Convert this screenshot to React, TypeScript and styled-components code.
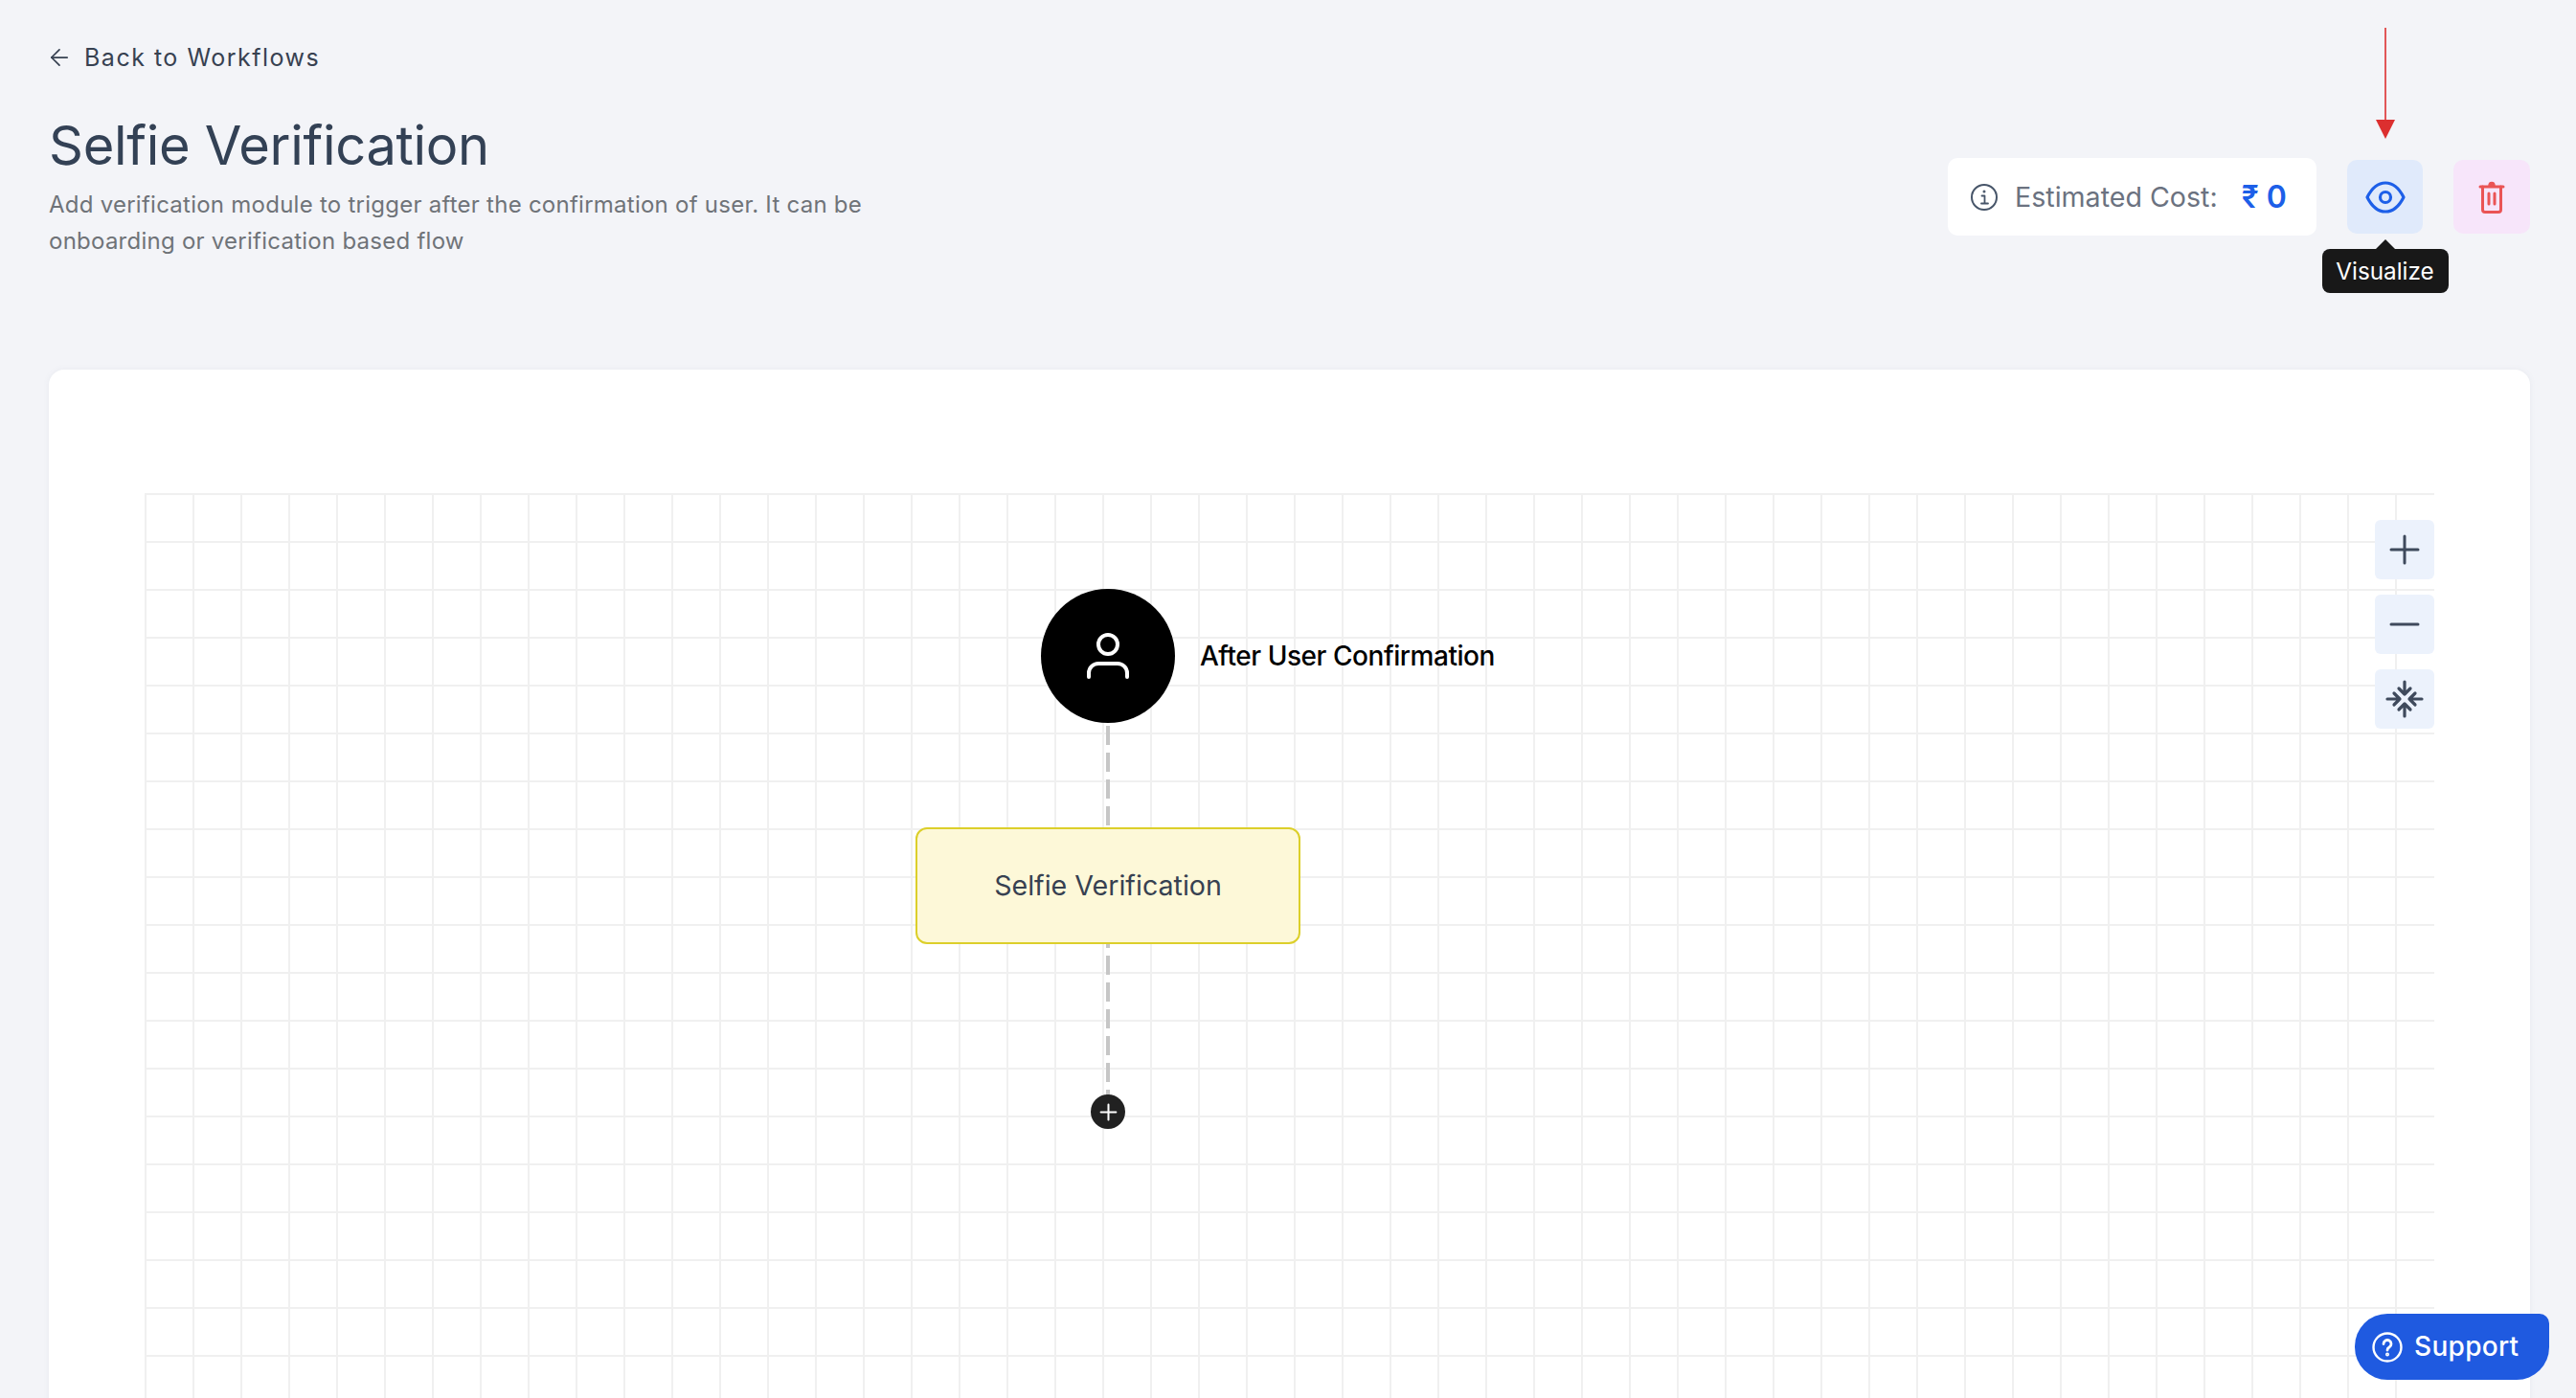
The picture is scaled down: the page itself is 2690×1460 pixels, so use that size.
import styled, { createGlobalStyle } from "styled-components";
import { ArrowLeft, Plus, Minus } from "lucide-react";

const GlobalStyle = createGlobalStyle`
    html, body {
        margin: 0;
        padding: 0;
        height: 100%;
        overflow: hidden;
        background: #f3f4f8;
        font-family: Inter, "Liberation Sans", sans-serif;
    }
    * {
        box-sizing: border-box;
    }
`;

const Page = styled.div`
    position: relative;
    height: 1460px;
    overflow: hidden;
    padding: 40px 48px 0 51px;
`;

const BackLink = styled.a`
    display: flex;
    align-items: center;
    gap: 12px;
    height: 40px;
    color: #374151;
    font-size: 25px;
    letter-spacing: 1.5px;
    svg {
        margin-left: -3px;
    }
`;

const Header = styled.div`
    display: flex;
    justify-content: space-between;
    align-items: flex-start;
    height: 306px;
`;

const TitleBlock = styled.div`
    width: 900px;
    padding-top: 38px;
`;

const Title = styled.h1`
    margin: 0;
    color: #334155;
    font-size: 56px;
    line-height: 68px;
    font-weight: 400;
    letter-spacing: -0.3px;
`;

const Description = styled.p`
    margin: 9px 0 0;
    color: #6f7378;
    font-size: 24px;
    line-height: 38px;
    letter-spacing: 0.25px;
`;

const Actions = styled.div`
    display: flex;
    align-items: center;
    margin-top: 85px;
`;

const CostBox = styled.div`
    display: flex;
    align-items: center;
    width: 385px;
    height: 81px;
    padding-left: 24px;
    background: #fff;
    border-radius: 10px;
    color: #6b7280;
    font-size: 28.6px;
    svg {
        color: #475569;
        margin-right: 18px;
    }
`;

const CostValue = styled.span`
    margin-left: 25px;
    color: #1d5fe8;
    font-size: 32px;
    font-weight: 600;
`;

const IconButton = styled.button<{ $bg: string; $color: string; $width: number }>`
    position: relative;
    display: flex;
    align-items: center;
    justify-content: center;
    width: ${props => props.$width}px;
    height: 77px;
    margin-left: 32px;
    padding: 0;
    border: none;
    border-radius: 10px;
    background: ${props => props.$bg};
    color: ${props => props.$color};
`;

const Tooltip = styled.div`
    position: absolute;
    top: 93px;
    left: 50%;
    transform: translateX(-50%);
    width: 132px;
    height: 46px;
    font-family: Inter, "Liberation Sans", sans-serif;
    line-height: 46px;
    text-align: center;
    border-radius: 8px;
    background: #181818;
    color: #fff;
    font-size: 24.3px;
    white-space: nowrap;
    &::before {
        content: "";
        position: absolute;
        top: -10px;
        left: 50%;
        margin-left: -10px;
        border-left: 10px solid transparent;
        border-right: 10px solid transparent;
        border-bottom: 10px solid #181818;
    }
`;

const PointerArrow = styled.svg`
    position: absolute;
    left: 2480px;
    top: 29px;
`;

const Card = styled.div`
    height: 1200px;
    padding: 129px 100px 0;
    background: #fff;
    border-radius: 16px;
    box-shadow: 0 0 6px rgba(100, 116, 139, 0.08);
`;

const Canvas = styled.div`
    position: relative;
    height: 1000px;
    overflow: hidden;
    background-color: #fff;
    background-image:
        linear-gradient(#f0f0f0 2px, transparent 2px),
        linear-gradient(90deg, #f0f0f0 2px, transparent 2px);
    background-size: 50px 50px;
`;

const ZoomControls = styled.div`
    position: absolute;
    top: 28px;
    right: 0;
    display: flex;
    flex-direction: column;
    gap: 16px;
`;

const ZoomButton = styled.button`
    display: flex;
    align-items: center;
    justify-content: center;
    width: 62px;
    height: 62px;
    padding: 0;
    border: none;
    border-radius: 6px;
    background: #ecf2fc;
    color: #3f4a5c;
`;

const StartNode = styled.div`
    position: absolute;
    left: 936px;
    top: 100px;
    display: flex;
    align-items: center;
    gap: 26px;
`;

const StartCircle = styled.div`
    display: flex;
    align-items: center;
    justify-content: center;
    width: 140px;
    height: 140px;
    border-radius: 50%;
    background: #000;
    color: #fff;
`;

const StartLabel = styled.span`
    color: #000;
    font-size: 28px;
    font-weight: 500;
    letter-spacing: -0.45px;
    white-space: nowrap;
`;

const Connector = styled.div<{ $top: number; $height: number; $phase: number }>`
    position: absolute;
    left: 1004px;
    top: ${props => props.$top}px;
    width: 4px;
    height: ${props => props.$height}px;
    background-image: linear-gradient(to bottom, #c6c6c6 20px, transparent 20px);
    background-size: 4px 28px;
    background-position: 0 ${props => props.$phase}px;
`;

const ModuleNode = styled.div`
    position: absolute;
    left: 805px;
    top: 349px;
    display: flex;
    align-items: center;
    justify-content: center;
    width: 402px;
    height: 122px;
    padding-bottom: 2px;
    background: #fdf8d8;
    border: 2px solid #dccf2a;
    border-radius: 12px;
    color: #374151;
    font-size: 28.6px;
`;

const AddButton = styled.button`
    position: absolute;
    left: 988px;
    top: 628px;
    display: flex;
    align-items: center;
    justify-content: center;
    width: 36px;
    height: 36px;
    padding: 0;
    border: none;
    border-radius: 50%;
    background: #212121;
    color: #fff;
`;

const SupportButton = styled.button`
    position: absolute;
    left: 2459px;
    top: 1372px;
    display: flex;
    align-items: center;
    gap: 12px;
    width: 203px;
    height: 69px;
    padding: 0 0 0 18px;
    border: none;
    border-radius: 34px 10px 34px 34px;
    background: #1f5ae0;
    color: #fff;
    font-family: Inter, "Liberation Sans", sans-serif;
    font-size: 28px;
    font-weight: 500;
    letter-spacing: 0.3px;
`;

const SupportLabel = styled.span`
    margin-top: -2px;
`;

const InfoIcon = () => (
    <svg width="28" height="28" viewBox="0 0 28 28" fill="none" stroke="currentColor" strokeWidth="2" strokeLinecap="round" strokeLinejoin="round">
        <circle cx="14" cy="14" r="13" />
        <path d="M11.500 12.500H14.500V20.500M11 20.500H18" strokeWidth="1.800" />
        <circle cx="14" cy="8" r="0.6" strokeWidth="1.800" />
    </svg>
);

const EyeIcon = () => (
    <svg width="44" height="34" viewBox="0 0 44 34" fill="none" stroke="currentColor" strokeWidth="3.200" strokeLinecap="round" strokeLinejoin="round">
        <path d="M3 17C8 7 14 2 22 2S36 7 41 17C36 27 30 32 22 32S8 27 3 17Z" />
        <circle cx="22" cy="17" r="5.500" />
    </svg>
);

const TrashIcon = () => (
    <svg width="28" height="34" viewBox="0 0 28 34" fill="none" stroke="currentColor" strokeWidth="3" strokeLinecap="round" strokeLinejoin="round">
        <path d="M2 6H26" />
        <path d="M11 5C11 2.500 12.500 1.500 14 1.500S17 2.500 17 5Z" fill="currentColor" strokeWidth="1.500" />
        <path d="M4.500 6V30C4.500 31.500 5.500 32.500 7 32.500H21C22.500 32.500 23.500 31.500 23.500 30V6" />
        <path d="M11 13V24M17 13V24" />
    </svg>
);

const UserIcon = () => (
    <svg width="50" height="50" viewBox="0 0 50 50" fill="none" stroke="currentColor" strokeWidth="4" strokeLinecap="round" strokeLinejoin="round">
        <circle cx="25" cy="13" r="10" />
        <path d="M5 47V43A10 10 0 0 1 15 33H35A10 10 0 0 1 45 43V47" />
    </svg>
);

const FitIcon = () => (
    <svg width="40" height="40" viewBox="0 0 40 40" fill="none" stroke="currentColor" strokeWidth="3.200" strokeLinecap="round" strokeLinejoin="round">
        <path d="M20 2V15M14 9L20 15L26 9" />
        <path d="M20 38V25M14 31L20 25L26 31" />
        <path d="M2 20H15M9 14L15 20L9 26" />
        <path d="M38 20H25M31 14L25 20L31 26" />
    </svg>
);

const HelpIcon = () => (
    <svg width="32" height="32" viewBox="0 0 32 32" fill="none" stroke="currentColor" strokeWidth="2.400" strokeLinecap="round">
        <circle cx="16" cy="16" r="14.500" />
        <path d="M12 12.500A4 4 0 1 1 18 16C16.700 16.800 16 17.500 16 19" strokeWidth="2.800" />
        <circle cx="16" cy="23.500" r="0.8" strokeWidth="2.400" />
    </svg>
);

export default function App() {
    return (
        <>
            <GlobalStyle />
            <Page>
                <BackLink>
                    <ArrowLeft size={28} strokeWidth={1.5} />
                    Back to Workflows
                </BackLink>
                <Header>
                    <TitleBlock>
                        <Title>Selfie Verification</Title>
                        <Description>
                            Add verification module to trigger after the confirmation of user. It can be onboarding or verification based flow
                        </Description>
                    </TitleBlock>
                    <Actions>
                        <CostBox>
                            <InfoIcon />
                            Estimated Cost:
                            <CostValue>₹ 0</CostValue>
                        </CostBox>
                        <IconButton $bg="#e0eafb" $color="#1d5fe8" $width={79}>
                            <EyeIcon />
                            <Tooltip>Visualize</Tooltip>
                        </IconButton>
                        <IconButton $bg="#f7e5fa" $color="#ea5455" $width={80}>
                            <TrashIcon />
                        </IconButton>
                    </Actions>
                </Header>
                <Card>
                    <Canvas>
                        <ZoomControls>
                            <ZoomButton><Plus size={48} strokeWidth={1.5} /></ZoomButton>
                            <ZoomButton><Minus size={48} strokeWidth={1.5} /></ZoomButton>
                            <ZoomButton><FitIcon /></ZoomButton>
                        </ZoomControls>
                        <StartNode>
                            <StartCircle><UserIcon /></StartCircle>
                            <StartLabel>After User Confirmation</StartLabel>
                        </StartNode>
                        <Connector $top={243} $height={105} $phase={0} />
                        <ModuleNode>Selfie Verification</ModuleNode>
                        <Connector $top={471} $height={158} $phase={12} />
                        <AddButton><Plus size={27} strokeWidth={1.8} /></AddButton>
                    </Canvas>
                </Card>
                <PointerArrow width="22" height="118" viewBox="0 0 22 118">
                    <line x1="11" y1="0" x2="11" y2="100" stroke="#dc2f2f" strokeWidth="1.6" />
                    <path d="M1 96H21L11 116Z" fill="#dc2f2f" />
                </PointerArrow>
                <SupportButton>
                    <HelpIcon />
                    <SupportLabel>Support</SupportLabel>
                </SupportButton>
            </Page>
        </>
    );
}
